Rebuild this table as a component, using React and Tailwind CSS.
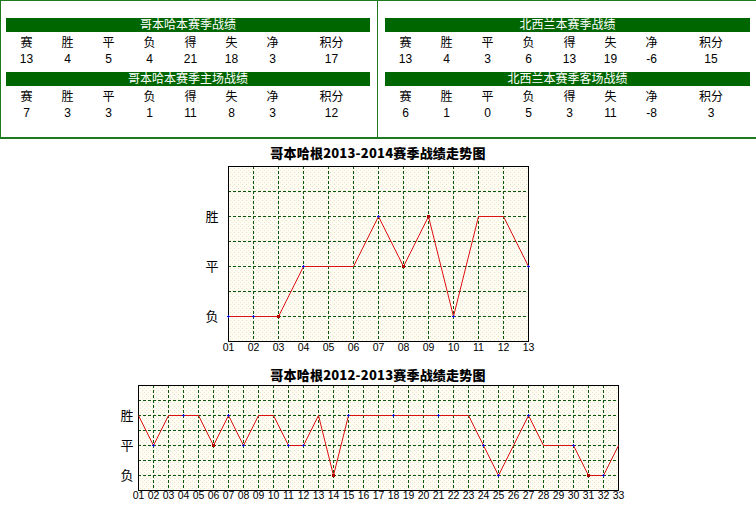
import React from "react";

const LABELS = ["赛", "胜", "平", "负", "得", "失", "净", "积分"];

function Block({ title, values, className = "" }) {
  return (
    <div className={className}>
      <div className="h-[14px] bg-[#006600] text-white text-[12px] leading-[14px] text-center">
        {title}
      </div>
      <div className="mt-[3px] grid grid-cols-[repeat(7,41px)_1fr] text-[12px] leading-[16px] text-center text-black">
        {LABELS.map((l, i) => (
          <div key={"l" + i}>{l}</div>
        ))}
        {values.map((v, i) => (
          <div key={"v" + i}>{v}</div>
        ))}
      </div>
    </div>
  );
}

function Chart({ data, width, height, x0, step, top, rowStep, yLabelX, xLabelY, blue = [], red = [] }) {
  const n = data.length;
  const x1 = x0 + step * (n - 1);
  const bottom = top + rowStep * 7;
  const levelY = { W: top + rowStep * 2, D: top + rowStep * 4, L: top + rowStep * 6 };
  const pts = data.map((d, i) => [x0 + i * step, levelY[d]]);
  const pid = "dots" + width;
  return (
    <svg width={width} height={height} className="block mx-auto" shapeRendering="crispEdges">
      <defs>
        <pattern id={pid} width="4" height="4" patternUnits="userSpaceOnUse">
          <rect width="4" height="4" fill="#fffdf3" />
          <rect x="0" y="0" width="1" height="1" fill="#e8e2c4" />
          <rect x="2" y="2" width="1" height="1" fill="#efeacf" />
        </pattern>
      </defs>
      <rect x={x0} y={top} width={x1 - x0} height={bottom - top} fill={`url(#${pid})`} />
      {Array.from({ length: n - 2 }, (_, i) => {
        const x = x0 + (i + 1) * step + 0.5;
        return (
          <line key={"v" + i} x1={x} y1={top} x2={x} y2={bottom} stroke="#0a560a" strokeDasharray="3 2" />
        );
      })}
      {Array.from({ length: 6 }, (_, i) => {
        const y = top + (i + 1) * rowStep + 0.5;
        return (
          <line key={"h" + i} x1={x0} y1={y} x2={x1} y2={y} stroke="#0a560a" strokeDasharray="3 2" />
        );
      })}
      <rect x={x0 + 0.5} y={top + 0.5} width={x1 - x0} height={bottom - top} fill="none" stroke="#000" />
      <polyline
        points={pts.map((p) => `${p[0] + 0.5},${p[1] + 0.5}`).join(" ")}
        fill="none"
        stroke="#dd1111"
        strokeWidth="1"
        shapeRendering="auto"
      />
      {pts.map((p, i) =>
        red.includes(i + 1) ? (
          <rect key={"r" + i} x={p[0] - 1} y={p[1] - 1} width="3" height="3" fill="#b00000" />
        ) : null
      )}
      {pts.map((p, i) =>
        blue.includes(i + 1) ? (
          <g key={"b" + i}>
            <rect x={p[0] - 1} y={p[1]} width="3" height="1" fill="#1010d0" />
            <rect x={p[0]} y={p[1] - 1} width="1" height="3" fill="#1010d0" />
          </g>
        ) : null
      )}
      {[
        ["胜", levelY.W],
        ["平", levelY.D],
        ["负", levelY.L],
      ].map(([t, y]) => (
        <text
          key={t}
          x={yLabelX}
          y={y + 5}
          textAnchor="middle"
          fontSize="13"
          fontFamily="'Noto Sans CJK SC', sans-serif"
          fill="#000"
        >
          {t}
        </text>
      ))}
      {pts.map((p, i) => (
        <text
          key={"x" + i}
          x={p[0] + 0.5}
          y={xLabelY + 4}
          textAnchor="middle"
          fontSize="10.5"
          fontFamily="'Liberation Sans', Arial, sans-serif"
          fill="#000"
        >
          {String(i + 1).padStart(2, "0")}
        </text>
      ))}
    </svg>
  );
}

const chart1 = ["L", "L", "L", "D", "D", "D", "W", "D", "W", "L", "W", "W", "D"];
const chart2 = "WDWWWDWDWWDDWLWWWWWWWWWDLDWDDDLLD".split("");

export default function App() {
  return (
    <div className="w-[756px] h-[505px] bg-white overflow-hidden font-['Liberation_Sans','Noto_Sans_CJK_SC',sans-serif] text-black">
      <div className="flex border-t border-b-2 border-[#1f7a1f]">
        <div className="w-[378px] border-l border-r border-[#1f7a1f] pl-[5px] pr-[7px] pt-[17px] pb-[16px]">
          <Block title="哥本哈本赛季战绩" values={[13, 4, 5, 4, 21, 18, 3, 17]} />
          <Block className="mt-[5px]" title="哥本哈本赛季主场战绩" values={[7, 3, 3, 1, 11, 8, 3, 12]} />
        </div>
        <div className="w-[378px] pl-[7px] pr-[6px] pt-[17px] pb-[16px]">
          <Block title="北西兰本赛季战绩" values={[13, 4, 3, 6, 13, 19, -6, 15]} />
          <Block className="mt-[5px]" title="北西兰本赛季客场战绩" values={[6, 1, 0, 5, 3, 11, -8, 3]} />
        </div>
      </div>

      <div className="mt-[7px] h-[14px] leading-[14px] text-center text-[13px] font-black tracking-[0.2px] font-['Noto_Sans_CJK_SC',sans-serif]">
        哥本哈根2013-2014赛季战绩走势图
      </div>
      <Chart
        data={chart1}
        width={360}
        height={200}
        x0={30}
        step={25}
        top={6}
        rowStep={25}
        yLabelX={14}
        xLabelY={187}
        blue={[1, 2, 4, 7, 10, 13]}
        red={[3, 8, 9]}
      />

      <div className="mt-[8px] h-[14px] leading-[14px] text-center text-[13px] font-black tracking-[0.2px] font-['Noto_Sans_CJK_SC',sans-serif]">
        哥本哈根2012-2013赛季战绩走势图
      </div>
      <Chart
        data={chart2}
        width={520}
        height={123}
        x0={20}
        step={15}
        top={3}
        rowStep={15}
        yLabelX={9}
        xLabelY={113}
        blue={[2, 4, 7, 8, 11, 12, 15, 18, 21, 24, 25, 27, 30, 32]}
        red={[6, 14, 31]}
      />
    </div>
  );
}
